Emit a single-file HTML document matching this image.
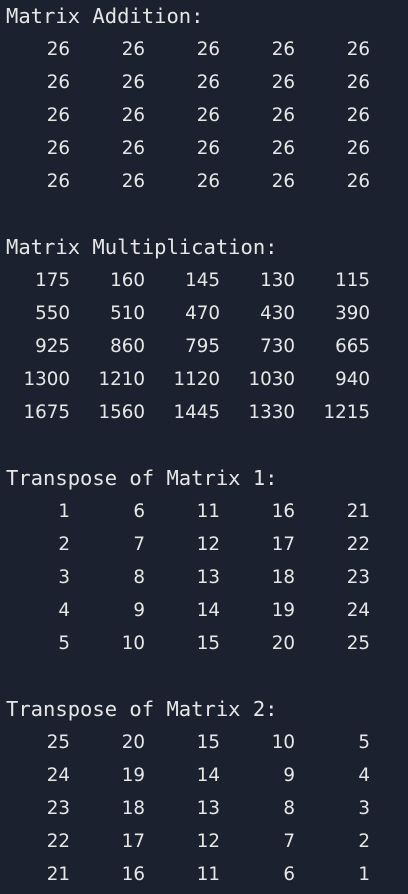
<!DOCTYPE html><html><head><style>
body{margin:0;width:408px;height:894px;background:#1c2130;color:#e6e6e6;overflow:hidden}
.l{height:33px;line-height:33px;white-space:pre;font-family:"DejaVu Sans Mono","Liberation Mono",monospace;font-size:20.5px;padding-left:6px}
.r{height:33px;line-height:33px;display:flex;margin-left:-5px;font-family:"DejaVu Sans","Liberation Sans",sans-serif;font-size:18.3px}
.r span{width:75px;text-align:right}
.c{padding-top:0}
</style></head><body><div class="c">
<div class="l">Matrix Addition:</div>
<div class="r"><span>26</span><span>26</span><span>26</span><span>26</span><span>26</span></div>
<div class="r"><span>26</span><span>26</span><span>26</span><span>26</span><span>26</span></div>
<div class="r"><span>26</span><span>26</span><span>26</span><span>26</span><span>26</span></div>
<div class="r"><span>26</span><span>26</span><span>26</span><span>26</span><span>26</span></div>
<div class="r"><span>26</span><span>26</span><span>26</span><span>26</span><span>26</span></div>
<div class="l"> </div>
<div class="l">Matrix Multiplication:</div>
<div class="r"><span>175</span><span>160</span><span>145</span><span>130</span><span>115</span></div>
<div class="r"><span>550</span><span>510</span><span>470</span><span>430</span><span>390</span></div>
<div class="r"><span>925</span><span>860</span><span>795</span><span>730</span><span>665</span></div>
<div class="r"><span>1300</span><span>1210</span><span>1120</span><span>1030</span><span>940</span></div>
<div class="r"><span>1675</span><span>1560</span><span>1445</span><span>1330</span><span>1215</span></div>
<div class="l"> </div>
<div class="l">Transpose of Matrix 1:</div>
<div class="r"><span>1</span><span>6</span><span>11</span><span>16</span><span>21</span></div>
<div class="r"><span>2</span><span>7</span><span>12</span><span>17</span><span>22</span></div>
<div class="r"><span>3</span><span>8</span><span>13</span><span>18</span><span>23</span></div>
<div class="r"><span>4</span><span>9</span><span>14</span><span>19</span><span>24</span></div>
<div class="r"><span>5</span><span>10</span><span>15</span><span>20</span><span>25</span></div>
<div class="l"> </div>
<div class="l">Transpose of Matrix 2:</div>
<div class="r"><span>25</span><span>20</span><span>15</span><span>10</span><span>5</span></div>
<div class="r"><span>24</span><span>19</span><span>14</span><span>9</span><span>4</span></div>
<div class="r"><span>23</span><span>18</span><span>13</span><span>8</span><span>3</span></div>
<div class="r"><span>22</span><span>17</span><span>12</span><span>7</span><span>2</span></div>
<div class="r"><span>21</span><span>16</span><span>11</span><span>6</span><span>1</span></div>
</div></body></html>
